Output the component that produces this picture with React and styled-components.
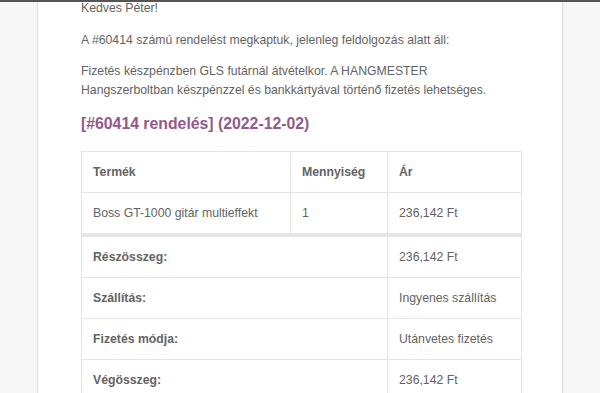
import React from "react";
import styled, { createGlobalStyle } from "styled-components";

const GlobalStyle = createGlobalStyle`
  html, body {
    margin: 0;
    padding: 0;
    background: #f7f7f7;
    overflow: hidden;
  }
  body {
    font-family: "Liberation Sans", Arial, Helvetica, sans-serif;
  }
`;

const Page = styled.div`
  width: 600px;
  height: 393px;
  overflow: hidden;
  border-top: 2px solid #555;
  box-sizing: border-box;
  background: #f7f7f7;
`;

const Card = styled.div`
  margin-left: 37px;
  width: 526px;
  min-height: 460px;
  box-sizing: border-box;
  background: #fff;
  border-left: 1px solid #e6e6e6;
  border-right: 1px solid #e0e0e0;
  box-shadow: 0 0 3px rgba(0, 0, 0, 0.06);
  padding: 0 42px 0 43px;
`;

const Text = styled.p`
  margin: 0 0 12.5px;
  font-size: 12.25px;
  line-height: 19px;
  color: #636363;

  &:first-child {
    margin-top: -3px;
  }
`;

const OrderTitle = styled.h2`
  margin: 0 0 17.5px;
  font-size: 15.8px;
  line-height: 21px;
  font-weight: bold;
  color: #93598a;
`;

const OrderTable = styled.table`
  width: 440px;
  border-collapse: collapse;
  table-layout: fixed;
  color: #636363;
  font-size: 12.25px;
`;

const Cell = styled.td`
  border: 1px solid #e5e5e5;
  padding: 10.5px 11px;
  line-height: 19px;
  text-align: left;
  vertical-align: middle;
  font-weight: ${(p) => (p.$bold ? "bold" : "normal")};
  border-top-width: ${(p) => (p.$thick ? "4px" : "1px")};
`;

const totals = [
  ["Részösszeg:", "236,142 Ft"],
  ["Szállítás:", "Ingyenes szállítás"],
  ["Fizetés módja:", "Utánvetes fizetés"],
  ["Végösszeg:", "236,142 Ft"],
];

export default function App() {
  return (
    <>
      <GlobalStyle />
      <Page>
        <Card>
          <Text>Kedves Péter!</Text>
          <Text>A #60414 számú rendelést megkaptuk, jelenleg feldolgozás alatt áll:</Text>
          <Text>
            Fizetés készpénzben GLS futárnál átvételkor. A HANGMESTER Hangszerboltban
            készpénzzel és bankkártyával történő fizetés lehetséges.
          </Text>
          <OrderTitle>[#60414 rendelés] (2022-12-02)</OrderTitle>
          <OrderTable>
            <colgroup>
              <col style={{ width: 209 }} />
              <col style={{ width: 97 }} />
              <col style={{ width: 134 }} />
            </colgroup>
            <thead>
              <tr>
                <Cell as="th" $bold>Termék</Cell>
                <Cell as="th" $bold>Mennyiség</Cell>
                <Cell as="th" $bold>Ár</Cell>
              </tr>
            </thead>
            <tbody>
              <tr>
                <Cell>Boss GT-1000 gitár multieffekt</Cell>
                <Cell>1</Cell>
                <Cell>236,142 Ft</Cell>
              </tr>
            </tbody>
            <tfoot>
              {totals.map(([label, value], i) => (
                <tr key={label}>
                  <Cell as="th" colSpan={2} $bold $thick={i === 0}>
                    {label}
                  </Cell>
                  <Cell $thick={i === 0}>{value}</Cell>
                </tr>
              ))}
            </tfoot>
          </OrderTable>
        </Card>
      </Page>
    </>
  );
}
